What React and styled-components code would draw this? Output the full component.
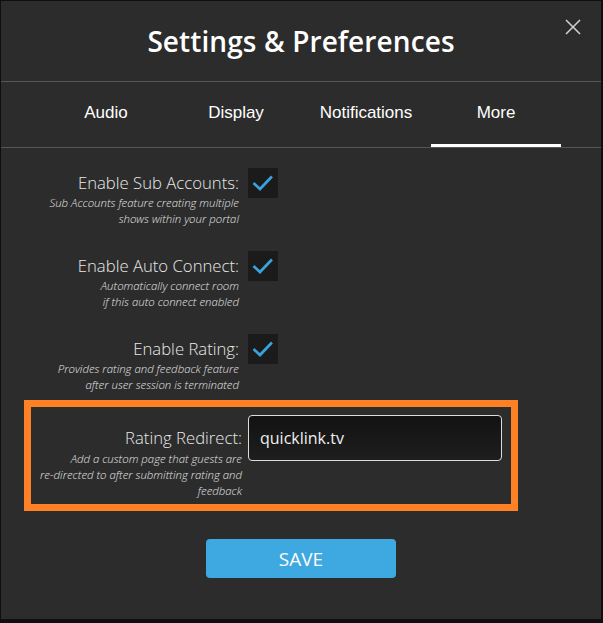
import React from 'react';
import styled, { createGlobalStyle } from 'styled-components';

const GlobalStyle = createGlobalStyle`
    html, body {
        margin: 0;
        padding: 0;
        background: #0f0f0f;
    }
    * {
        box-sizing: border-box;
    }
`;

const Modal = styled.div`
    position: relative;
    margin: 1px 0 0 1px;
    width: 600px;
    height: 618px;
    background: #2c2c2c;
    font-family: "Open Sans", "Noto Sans", sans-serif;
    color: #e6e6e6;
`;

const Header = styled.div`
    height: 81px;
    border-bottom: 1px solid #565656;
    display: flex;
    align-items: center;
    justify-content: center;
`;

const Title = styled.h1`
    margin: 0;
    font-size: 28px;
    font-weight: 600;
    color: #ffffff;
    letter-spacing: 0.1px;
`;

const CloseButton = styled.button`
    position: absolute;
    top: 17px;
    right: 19px;
    width: 18px;
    height: 18px;
    padding: 0;
    border: none;
    background: none;
    cursor: pointer;
    display: flex;
    align-items: center;
    justify-content: center;
`;

// tab strip, 4 tabs of 130px centered
const Tabs = styled.div`
    height: 66px;
    border-bottom: 1px solid #565656;
    display: flex;
    justify-content: center;
`;

const Tab = styled.div`
    width: 130px;
    height: 65px;
    display: flex;
    align-items: center;
    justify-content: center;
    font-family: "Liberation Sans", Arial, sans-serif;
    font-size: 17px;
    color: #ffffff;
    cursor: pointer;
    border-bottom: 3px solid ${props => props.$active ? '#ffffff' : 'transparent'};
`;

const Form = styled.div`
    padding-top: 20px;
`;

const Row = styled.div`
    display: grid;
    grid-template-columns: ${props => props.$labelWidth || 238}px auto;
    column-gap: ${props => props.$gap || 9}px;
    align-items: start;

    & + & {
        margin-top: 24px;
    }
`;

const LabelCol = styled.div`
    padding-top: ${props => props.$offset || 4}px;
    text-align: right;
`;

const Label = styled.div`
    font-size: 16.7px;
    line-height: 22px;
    color: #e8e8e8;
    font-weight: 300;
`;

const Description = styled.div`
    margin-top: ${props => props.$space || 1}px;
    font-size: 11.4px;
    line-height: 16px;
    font-style: italic;
    font-weight: 300;
    color: #e4e4e4;
`;

const CheckBox = styled.div`
    width: 30px;
    height: 30px;
    background: #1b1b1b;
    display: flex;
    align-items: center;
    justify-content: center;
    cursor: pointer;
`;

// the orange frame round the redirect setting
const Highlight = styled.div`
    margin: 7px 0 0 23px;
    width: 494px;
    border: 7px solid #ff8126;
    padding: 8px 0 5px 0;
`;

const TextInput = styled.input`
    width: 254px;
    height: 46px;
    padding: 0 11px;
    border: 1px solid #dcdcdc;
    border-radius: 4px;
    background: linear-gradient(#121212, #1e1e1e);
    color: #f0f0f0;
    font-family: "Open Sans", "Noto Sans", sans-serif;
    font-size: 16px;
    outline: none;
`;

const Footer = styled.div`
    margin-top: 28px;
    display: flex;
    justify-content: center;
`;

const SaveButton = styled.button`
    width: 190px;
    height: 39px;
    border: none;
    border-radius: 4px;
    background: #3ea8e0;
    color: #ffffff;
    font-family: "Open Sans", "Noto Sans", sans-serif;
    font-size: 19px;
    cursor: pointer;
    padding: 0;
`;

const CheckIcon = () => (
    <svg width="30" height="30" viewBox="0 0 30 30">
        <polyline points="6.5,16 12,21 23,9.5" fill="none" stroke="#3aa3dc" strokeWidth="2.7" strokeLinecap="square" />
    </svg>
);

const CloseIcon = () => (
    <svg width="16" height="16" viewBox="0 0 16 16">
        <line x1="1" y1="1" x2="15" y2="15" stroke="#cfcfcf" strokeWidth="1.6" />
        <line x1="15" y1="1" x2="1" y2="15" stroke="#cfcfcf" strokeWidth="1.6" />
    </svg>
);

const tabs = ['Audio', 'Display', 'Notifications', 'More'];

const toggles = [
    { label: 'Enable Sub Accounts:', lines: ['Sub Accounts feature creating multiple', 'shows within your portal'] },
    { label: 'Enable Auto Connect:', lines: ['Automatically connect room', 'if this auto connect enabled'] },
    { label: 'Enable Rating:', lines: ['Provides rating and feedback feature', 'after user session is terminated'] },
];

const Lines = ({ lines }) => lines.map((l, i) => <div key={i}>{l}</div>);

const App = () => {
    return (
        <>
            <GlobalStyle />
            <Modal>
                <Header>
                    <Title>Settings &amp; Preferences</Title>
                </Header>
                <CloseButton aria-label="Close"><CloseIcon /></CloseButton>

                <Tabs>
                    {tabs.map(t => <Tab key={t} $active={t === 'More'}>{t}</Tab>)}
                </Tabs>

                <Form>
                    {toggles.map(t => (
                        <Row key={t.label}>
                            <LabelCol>
                                <Label>{t.label}</Label>
                                <Description><Lines lines={t.lines} /></Description>
                            </LabelCol>
                            <CheckBox><CheckIcon /></CheckBox>
                        </Row>
                    ))}

                    <Highlight>
                        <Row $labelWidth={211} $gap={6}>
                            <LabelCol $offset={12}>
                                <Label>Rating Redirect:</Label>
                                <Description $space={2}>
                                    <Lines lines={['Add a custom page that guests are', 're-directed to after submitting rating and', 'feedback']} />
                                </Description>
                            </LabelCol>
                            <TextInput defaultValue="quicklink.tv" />
                        </Row>
                    </Highlight>

                    <Footer>
                        <SaveButton>SAVE</SaveButton>
                    </Footer>
                </Form>
            </Modal>
        </>
    );
};

export default App;
